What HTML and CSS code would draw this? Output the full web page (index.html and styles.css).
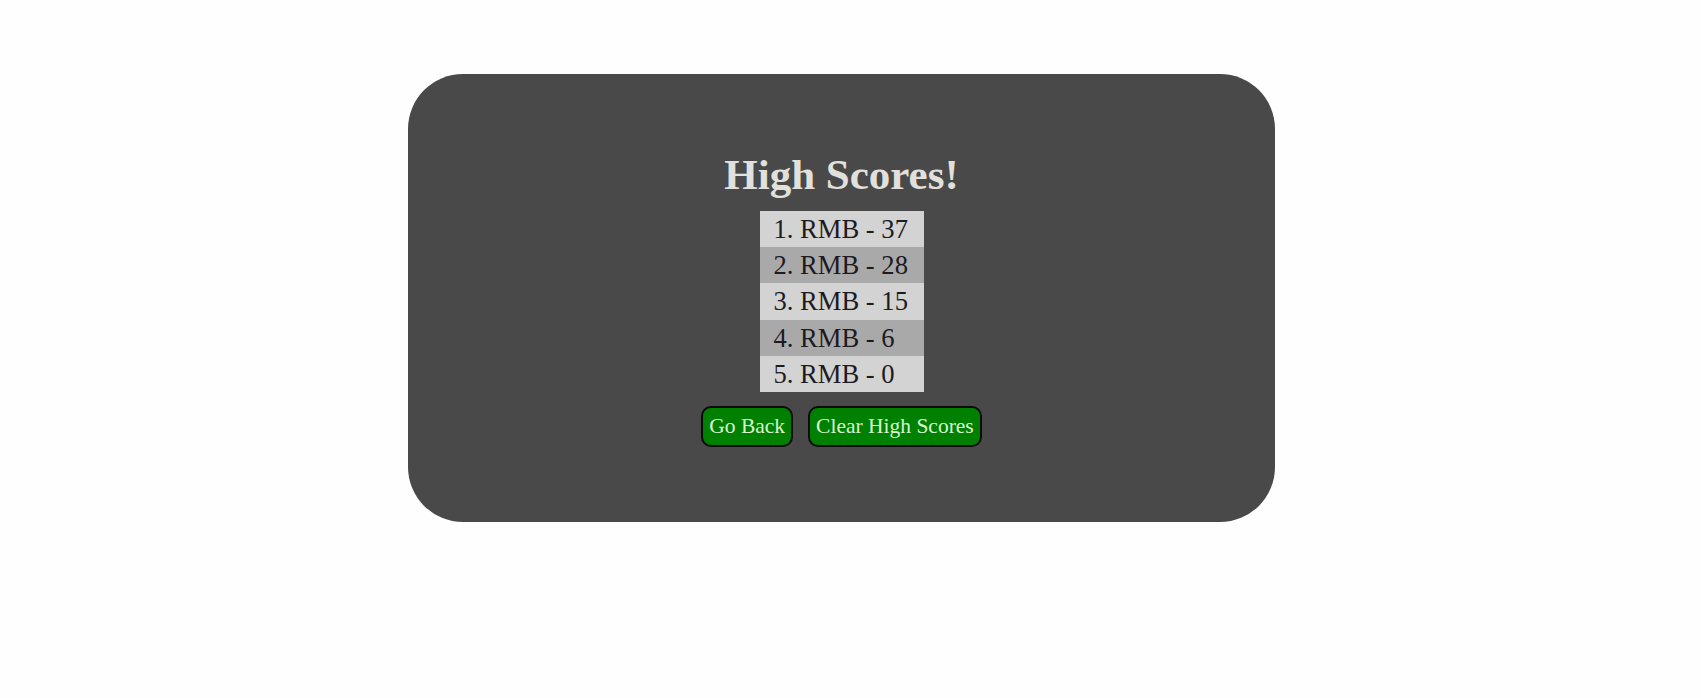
FILE: index.html
```html
<!DOCTYPE html>
<html>
<head>
<meta charset="utf-8">
<link rel="stylesheet" href="styles.css">
</head>
<body>
<div class="page">
  <div class="card">
    <h1 class="title">High Scores!</h1>
    <ol class="scores">
      <li class="row light">1. RMB - 37</li>
      <li class="row dark">2. RMB - 28</li>
      <li class="row light">3. RMB - 15</li>
      <li class="row dark">4. RMB - 6</li>
      <li class="row light">5. RMB - 0</li>
    </ol>
    <div class="actions">
      <button class="btn">Go Back</button>
      <button class="btn">Clear High Scores</button>
    </div>
  </div>
</div>
</body>
</html>
```
FILE: styles.css
```css
html, body {
  margin: 0;
  padding: 0;
  background: #fefefe;
}
body {
  font-family: "Liberation Serif", "Times New Roman", serif;
}
.page {
  padding: 74px 0 0 408px;
}
.card {
  width: 867px;
  box-sizing: border-box;
  background: #494949;
  border-radius: 55px;
  padding: 76px 0 75px;
  display: flex;
  flex-direction: column;
  align-items: center;
}
.title {
  margin: 0 0 12px;
  font-size: 43px;
  font-weight: bold;
  color: #e2e0dc;
  line-height: normal;
}
.scores {
  list-style: none;
  margin: 0 0 14px;
  padding: 0;
  width: 164px;
}
.row {
  font-size: 26.6px;
  line-height: 30px;
  padding: 3px 14px 3px 14px;
  color: #1c1a22;
  height: 30.2px;
}
.light { background: #d3d3d3; }
.dark { background: #a9a9a9; }
.actions {
  display: flex;
  gap: 15px;
}
.btn {
  font-family: "Liberation Serif", "Times New Roman", serif;
  font-size: 21.5px;
  line-height: 25px;
  padding: 6px 6px;
  background: #008000;
  color: #d8f5cf;
  border: 2px solid #0a0a0a;
  border-radius: 10px;
}
```
